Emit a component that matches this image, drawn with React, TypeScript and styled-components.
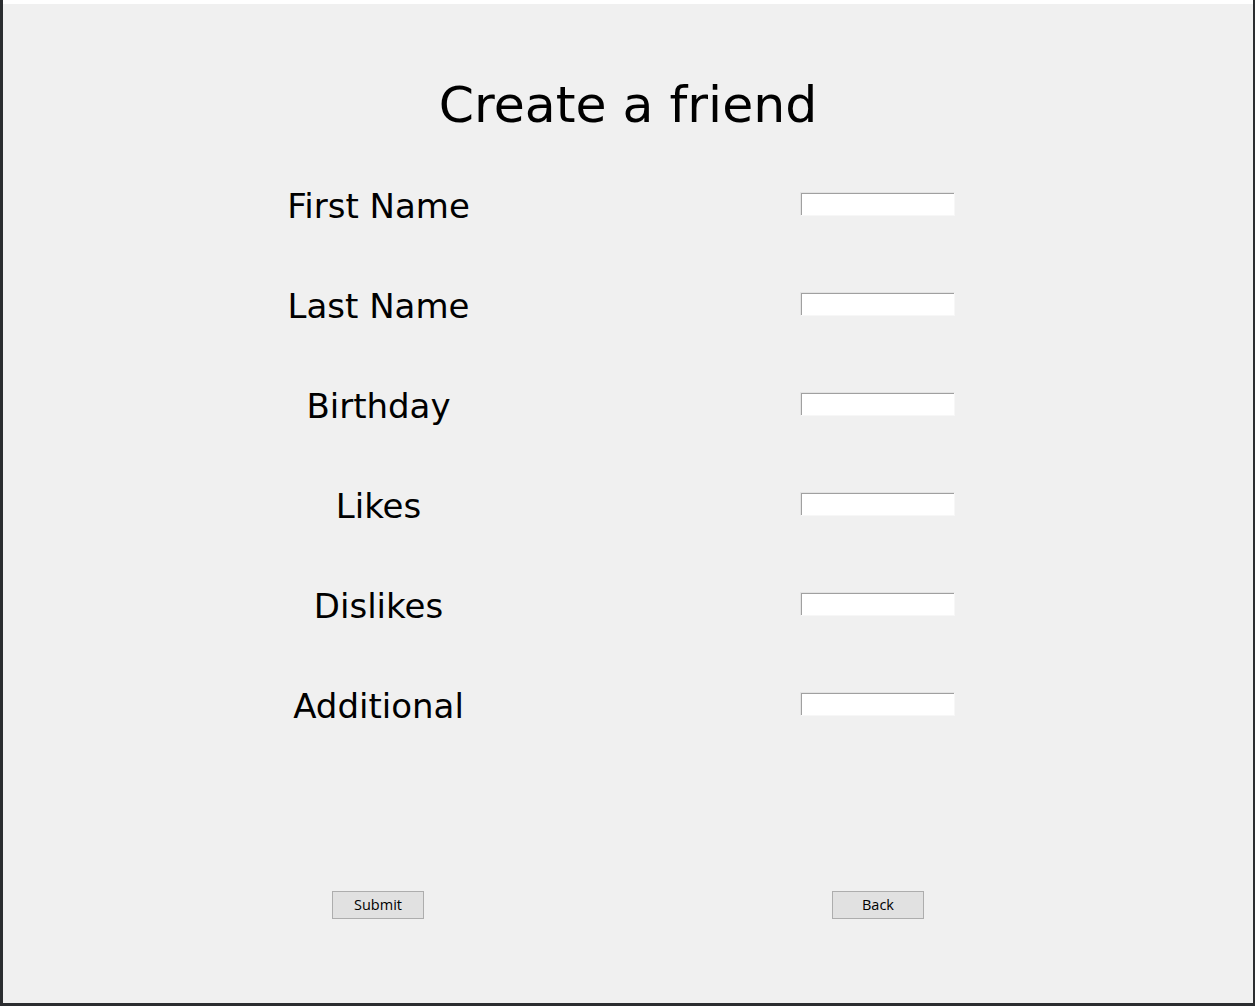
import React from "react";
import styled, { createGlobalStyle } from "styled-components";

const GlobalStyle = createGlobalStyle`
  html, body {
    margin: 0;
    padding: 0;
    background: #2b2d30;
  }
  #root {
    width: 1255px;
    height: 1006px;
  }
`;

const Screen = styled.div`
  width: 1255px;
  height: 1006px;
  background: #2b2d30;
  display: flex;
  flex-direction: column;
  padding: 0 2px 3px 3px;
  box-sizing: border-box;
`;

const TopStrip = styled.div`
  height: 4px;
  background: #ffffff;
  flex: none;
`;

const Window = styled.div`
  flex: 1;
  background: #f0f0f0;
  display: flex;
  flex-direction: column;
  padding-top: 50px;
  font-family: "DejaVu Sans", Verdana, sans-serif;
  color: #000;
`;

const TitleRow = styled.div`
  height: 100px;
  display: flex;
  align-items: center;
  justify-content: center;
`;

const Title = styled.h1`
  margin: 0;
  padding-top: 3px;
  font-size: 50.5px;
  font-weight: normal;
  line-height: 1;
`;

const Form = styled.div`
  display: grid;
  grid-template-columns: 500px 500px;
  grid-auto-rows: 100px;
  margin-left: 125px;
`;

const Cell = styled.div`
  display: flex;
  align-items: center;
  justify-content: center;
`;

const Label = styled.label`
  font-size: 34px;
  line-height: 1;
  padding-top: 4px;
  padding-left: 1px;
`;

const Entry = styled.input`
  width: 155px;
  height: 24px;
  box-sizing: border-box;
  margin: 0 2px 1px 0;
  padding: 0 2px;
  background: #ffffff;
  border: 1px solid;
  border-color: #e3e3e3 #f7f7f7 #f7f7f7 #e3e3e3;
  box-shadow: inset 1px 1px 0 #a0a0a0;
  outline: none;
  font-family: "DejaVu Sans", sans-serif;
  font-size: 12px;
`;

const Spacer = styled.div`
  height: 100px;
`;

const ButtonRow = styled.div`
  display: grid;
  grid-template-columns: 500px 500px;
  height: 100px;
  margin-left: 125px;
`;

const Button = styled.button`
  width: 92px;
  height: 28px;
  margin-top: 1px;
  background: #e1e1e1;
  border: 1px solid #adadad;
  border-radius: 0;
  padding: 0;
  font-family: "Open Sans", "Noto Sans", sans-serif;
  font-size: 14.5px;
  color: #000;
  cursor: default;
`;

const fields = ["First Name", "Last Name", "Birthday", "Likes", "Dislikes", "Additional"];

export default function App() {
  return (
    <>
      <GlobalStyle />
      <Screen>
        <TopStrip />
        <Window>
          <TitleRow>
            <Title>Create a friend</Title>
          </TitleRow>
          <Form>
            {fields.map((f) => (
              <React.Fragment key={f}>
                <Cell>
                  <Label>{f}</Label>
                </Cell>
                <Cell>
                  <Entry type="text" />
                </Cell>
              </React.Fragment>
            ))}
          </Form>
          <Spacer />
          <ButtonRow>
            <Cell>
              <Button>Submit</Button>
            </Cell>
            <Cell>
              <Button>Back</Button>
            </Cell>
          </ButtonRow>
        </Window>
      </Screen>
    </>
  );
}
